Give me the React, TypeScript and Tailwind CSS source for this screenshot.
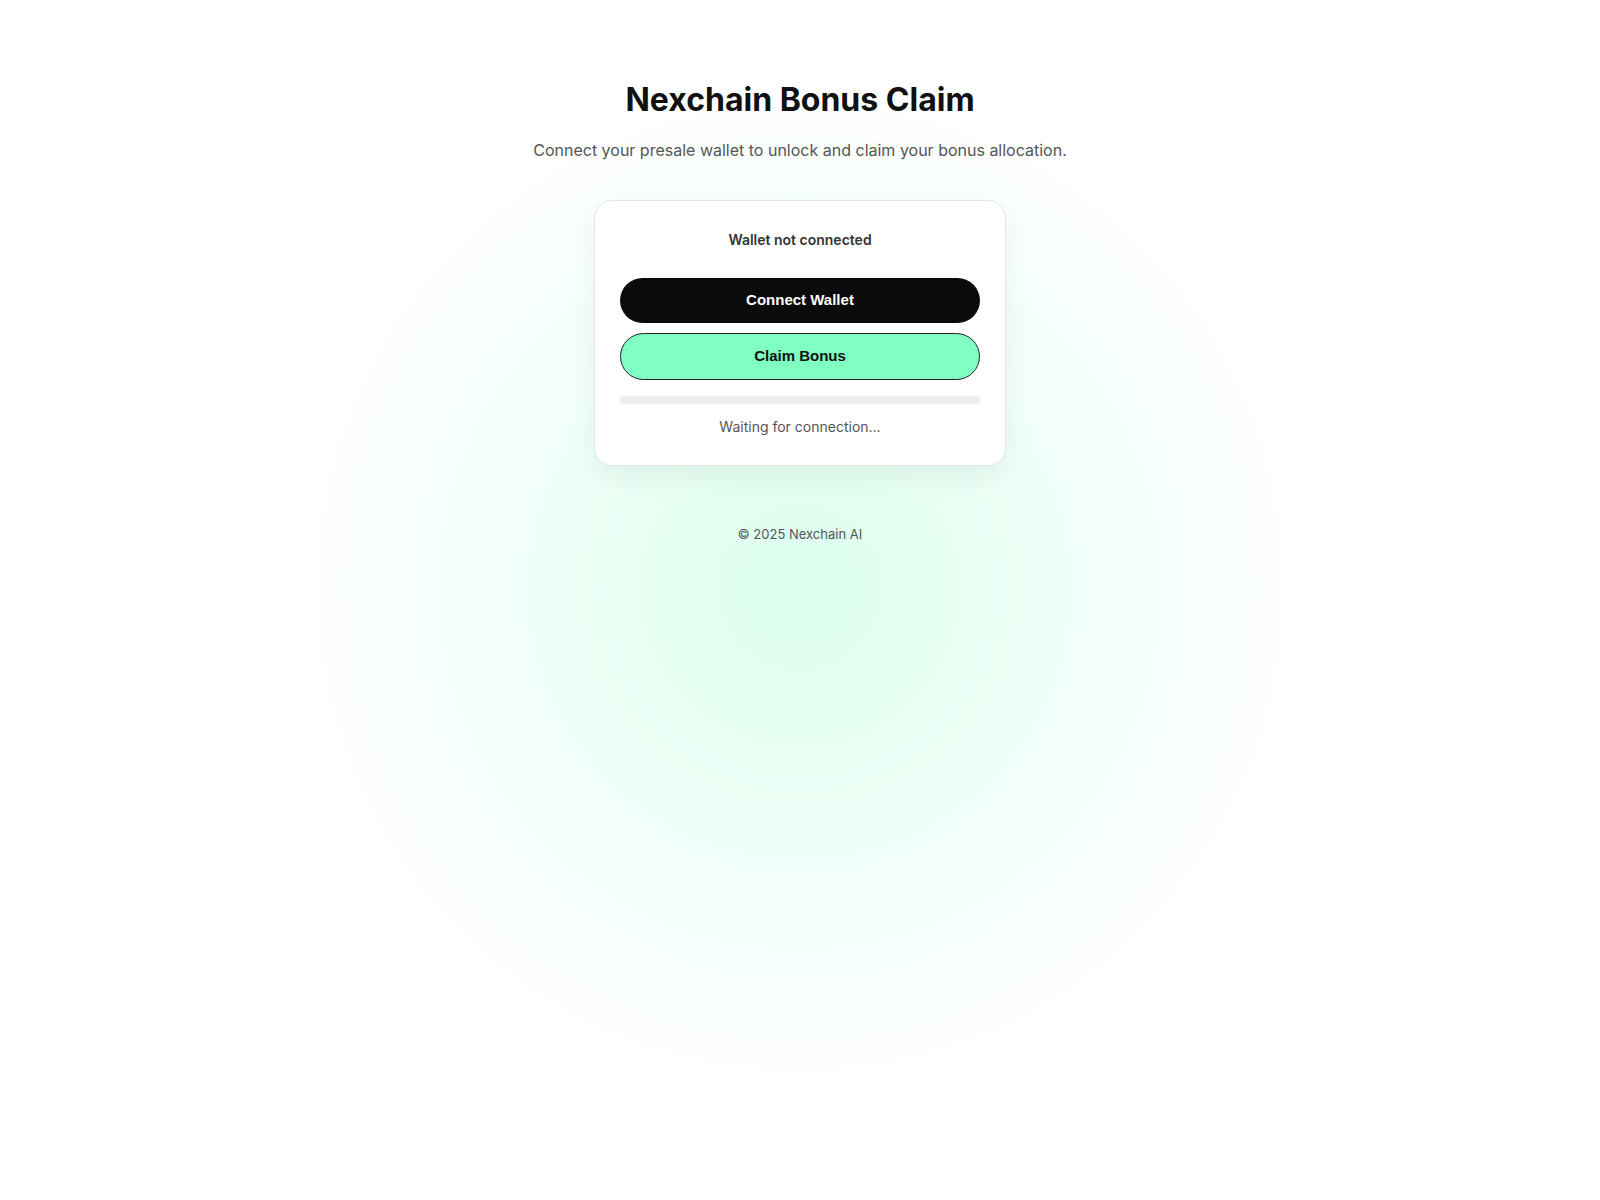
export default function App() {
  return (
    <div
      className="min-h-screen w-full bg-white bg-[radial-gradient(circle_at_50%_49%,rgba(127,255,193,0.28)_0%,rgba(127,255,193,0.12)_270px,rgba(255,255,255,0)_505px)] text-[#111] flex flex-col items-center"
      style={{ fontFamily: 'Inter, "Noto Sans", sans-serif' }}
    >
      {/* Header */}
      <h1 className="mt-[80px] text-[32px] leading-[40px] font-bold text-[#111]">
        Nexchain Bonus Claim
      </h1>
      <p className="mt-[18px] text-[16px] leading-[24px] text-[#555]">
        Connect your presale wallet to unlock and claim your bonus allocation.
      </p>

      {/* Card */}
      <div className="mt-[38px] w-[412px] bg-white rounded-[18px] border border-[#e6e6e6] shadow-[0_10px_30px_rgba(0,0,0,0.06)] px-[25px] pt-[29px] pb-[28px] flex flex-col">
        <div className="text-center text-[14px] leading-[20px] font-semibold text-[#333]">
          Wallet not connected
        </div>

        <button
          className="mt-[28px] h-[45px] w-full rounded-full bg-[#0b0b0b] text-white text-[15px] font-bold"
          style={{ fontFamily: '"Liberation Sans", Arial, sans-serif' }}
        >
          Connect Wallet
        </button>
        <button
          className="mt-[10px] h-[47px] w-full rounded-full bg-[#7fffc1] border border-[#222] text-[#111] text-[15px] font-bold"
          style={{ fontFamily: '"Liberation Sans", Arial, sans-serif' }}
        >
          Claim Bonus
        </button>

        <div className="mt-[16px] h-[8px] w-full rounded-full bg-[#eeeeee]" />

        <div className="mt-[13px] text-center text-[14px] leading-[20px] text-[#555]">
          Waiting for connection...
        </div>
      </div>

      {/* Footer */}
      <footer className="mt-[59px] text-[13px] leading-[18px] text-[#555]">
        © 2025 Nexchain AI
      </footer>
    </div>
  );
}
